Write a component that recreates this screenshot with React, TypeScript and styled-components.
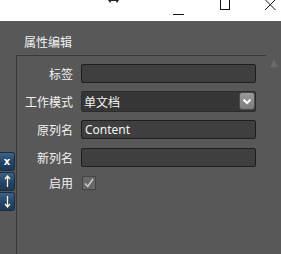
import React from "react";
import styled, { createGlobalStyle } from "styled-components";

const Global = createGlobalStyle`
  html, body { margin: 0; padding: 0; background: #ffffff; }
  body { font-family: "Noto Sans", "Noto Sans CJK SC", sans-serif; font-size: 12px; }
  * { box-sizing: border-box; }
`;

const Window = styled.div`
  width: 281px;
  height: 254px;
  display: flex;
  flex-direction: column;
  overflow: hidden;
`;

const TitleBar = styled.div`
  height: 21px;
  background: #ffffff;
  display: flex;
  align-items: flex-start;
  flex: none;
`;

const Ctl = styled.div<{ $left: number; $w: number }>`
  margin-left: ${(p) => p.$left}px;
  width: ${(p) => p.$w}px;
  height: 21px;
  flex: none;
  display: flex;
`;

const Main = styled.div`
  flex: 1;
  background: #585858;
  display: flex;
  flex-direction: column;
`;

const Header = styled.div`
  height: 34px;
  padding: 13px 0 0 24px;
  color: #f2f2f2;
  font-family: "Noto Sans CJK SC", sans-serif;
  font-size: 12px;
  line-height: 16px;
  flex: none;
`;

const Body = styled.div`
  flex: 1;
  display: flex;
`;

const SideBar = styled.div`
  width: 16px;
  flex: none;
  padding-top: 97px;
  display: flex;
  flex-direction: column;
  gap: 1px;
`;

const SideButton = styled.div`
  width: 15px;
  height: 19px;
  border-radius: 0 3px 3px 0;
  background: linear-gradient(#3d6388, #234465 55%, #1c3a58);
  border: 1px solid #1a2f45;
  border-left: none;
  color: #ffffff;
  display: flex;
  align-items: center;
  justify-content: center;
  font-family: "DejaVu Sans", sans-serif;
  font-weight: bold;
  font-size: 10px;
  line-height: 1;
`;

const Panel = styled.div`
  width: 250px;
  flex: none;
  border-top: 1px solid #3a3a3a;
  border-left: 1px solid #3a3a3a;
  padding: 3px 9px 0 0;
  display: flex;
  flex-direction: column;
`;

const ScrollCol = styled.div`
  flex: 1;
  display: flex;
  justify-content: center;
  padding-top: 5px;
`;

const Row = styled.div<{ $h?: number }>`
  height: ${(p) => p.$h ?? 28}px;
  display: flex;
  align-items: center;
  gap: 8px;
`;

const Label = styled.div`
  width: 56px;
  text-align: right;
  color: #f2f2f2;
  font-family: "Noto Sans CJK SC", sans-serif;
  font-size: 12px;
  white-space: nowrap;
`;

const Field = styled.div`
  width: 175px;
  height: 19px;
  background: #3f3f3f;
  border: 1px solid #1e1e1e;
  border-radius: 2px;
  color: #f4f4f4;
  font-family: "Noto Sans", sans-serif;
  font-size: 12px;
  line-height: 17px;
  padding-left: 3px;
`;

const Select = styled.div`
  width: 175px;
  height: 21px;
  background: #363636;
  border: 1px solid #2c2c2c;
  border-radius: 2px;
  display: flex;
  align-items: center;
  justify-content: space-between;
  padding-left: 2px;
  color: #f4f4f4;
  font-family: "Noto Sans CJK SC", sans-serif;
  font-size: 12px;
`;

const DropButton = styled.div`
  width: 16px;
  height: 18px;
  margin-right: 0px;
  border-radius: 3px;
  background: linear-gradient(#9a9a9a, #7c7c7c);
  border: 1px solid #4a4a4a;
  display: flex;
  align-items: center;
  justify-content: center;
`;

const Check = styled.div`
  width: 14px;
  height: 14px;
  margin-left: 1px;
  background: #686868;
  border: 1px solid #444444;
  display: flex;
  align-items: center;
  justify-content: center;
`;

export default function App() {
  return (
    <Window>
      <Global />
      <TitleBar>
        <Ctl $left={108} $w={11}>
          <svg width="11" height="4" viewBox="0 0 11 4">
            <path d="M0 0 L11 0 L9 3 L8 1 L3 1 L2 3 Z" fill="#222" />
          </svg>
        </Ctl>
        <Ctl $left={54} $w={12}>
          <svg width="12" height="21" viewBox="0 0 12 21">
            <line x1="0" y1="14.5" x2="11" y2="14.5" stroke="#111" strokeWidth="1" />
          </svg>
        </Ctl>
        <Ctl $left={35} $w={11}>
          <svg width="11" height="21" viewBox="0 0 11 21">
            <rect x="0.5" y="-1" width="9" height="10.5" fill="none" stroke="#111" strokeWidth="1" />
          </svg>
        </Ctl>
        <Ctl $left={34} $w={12}>
          <svg width="12" height="21" viewBox="0 0 12 21">
            <path d="M0 -0.5 L10.5 10 M10.5 -0.5 L0 10" stroke="#111" strokeWidth="1" />
          </svg>
        </Ctl>
      </TitleBar>
      <Main>
        <Header>属性编辑</Header>
        <Body>
          <SideBar>
            <SideButton>x</SideButton>
            <SideButton>
              <svg width="7" height="13" viewBox="0 0 7 13">
                <path d="M3.5 1 V12 M1 4 L3.5 1 L6 4" stroke="#fff4e0" strokeWidth="1.3" fill="none" />
              </svg>
            </SideButton>
            <SideButton>
              <svg width="7" height="13" viewBox="0 0 7 13">
                <path d="M3.5 1 V12 M1 9 L3.5 12 L6 9" stroke="#fff4e0" strokeWidth="1.3" fill="none" />
              </svg>
            </SideButton>
          </SideBar>
          <Panel>
            <Row>
              <Label>标签</Label>
              <Field />
            </Row>
            <Row>
              <Label>工作模式</Label>
              <Select>
                <span>单文档</span>
                <DropButton>
                  <svg width="10" height="7" viewBox="0 0 10 7">
                    <path d="M1.5 1.5 L5 5 L8.5 1.5" stroke="#ffffff" strokeWidth="2" fill="none" />
                  </svg>
                </DropButton>
              </Select>
            </Row>
            <Row>
              <Label>原列名</Label>
              <Field>Content</Field>
            </Row>
            <Row>
              <Label>新列名</Label>
              <Field />
            </Row>
            <Row $h={23}>
              <Label>启用</Label>
              <Check>
                <svg width="12" height="12" viewBox="0 0 12 12">
                  <path d="M2 6.5 L4.8 9.5 L10 2" stroke="#d0d0d0" strokeWidth="1.4" fill="none" />
                </svg>
              </Check>
            </Row>
          </Panel>
          <ScrollCol>
            <svg width="8" height="7" viewBox="0 0 8 7">
              <path d="M4 0 L8 7 L0 7 Z" fill="#6b6b6b" />
            </svg>
          </ScrollCol>
        </Body>
      </Main>
    </Window>
  );
}
